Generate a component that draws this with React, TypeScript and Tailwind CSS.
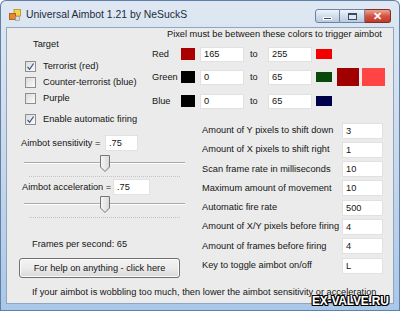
import clsx from "clsx";

type SettingRow = { label: string; value: string };

const settings: SettingRow[] = [
  { label: "Amount of Y pixels to shift down", value: "3" },
  { label: "Amount of X pixels to shift right", value: "1" },
  { label: "Scan frame rate in milliseconds", value: "10" },
  { label: "Maximum amount of movement", value: "10" },
  { label: "Automatic fire rate", value: "500" },
  { label: "Amount of X/Y pixels before firing", value: "4" },
  { label: "Amount of frames before firing", value: "4" },
  { label: "Key to toggle aimbot on/off", value: "L" },
];

function Field({ value, className }: { value: string; className?: string }) {
  return (
    <div className={clsx("shrink-0 border border-[#e1e1e1] bg-white pl-[3px] leading-[13px]", className)}>
      {value}
    </div>
  );
}

function CheckRow({ label, checked, className }: { label: string; checked?: boolean; className?: string }) {
  return (
    <div className={clsx("flex h-[16px] items-center", className)}>
      <span className="ml-[18px] flex h-[11px] w-[11px] items-center justify-center border border-[#8e8f8f] bg-gradient-to-br from-[#dcdcdc] to-[#fbfbfb]">
        {checked && (
          <svg width="9" height="9" viewBox="0 0 9 9">
            <path d="M1.5 4.8 L3.6 7.3 L7.6 1.5" fill="none" stroke="#3d4f86" strokeWidth="1.2" />
          </svg>
        )}
      </span>
      <span className="ml-[7px]">{label}</span>
    </div>
  );
}

function Slider({ className }: { className?: string }) {
  return (
    <div className={clsx("relative ml-[17px] flex h-[24px] w-[161px] flex-col", className)}>
      <div className="mt-[8px] h-[2px] border-t border-[#a9a9a9] bg-white" />
      <div className="mx-[5px] mt-[12px] border-t border-dotted border-[#c4c4c4]" />
      <svg className="absolute left-[76px] top-[1px]" width="10" height="17" viewBox="0 0 10 17">
        <defs>
          <linearGradient id="thumb" x1="0" x2="1" y1="0" y2="0">
            <stop offset="0" stopColor="#f7f7f7" />
            <stop offset="1" stopColor="#d9d9d9" />
          </linearGradient>
        </defs>
        <path d="M0.5 0.5 H9.5 V12 L5 16.5 L0.5 12 Z" fill="url(#thumb)" stroke="#767676" />
      </svg>
    </div>
  );
}

function ColorRow({
  label,
  from,
  to,
  left,
  right,
  extra,
  className,
}: {
  label: string;
  from: string;
  to: string;
  left: string;
  right: string;
  extra?: boolean;
  className?: string;
}) {
  return (
    <div className={clsx("flex h-[16px] items-center", className)}>
      <span className="w-[29px]">{label}</span>
      <span className={clsx("h-[12px] w-[14px] shrink-0", left)} />
      <Field value={from} className="ml-[5px] h-[15px] w-[44px]" />
      <span className="ml-[6px] w-[18px]">to</span>
      <Field value={to} className="h-[15px] w-[44px]" />
      <span className={clsx("ml-[4px] h-[10px] w-[16px] shrink-0", right)} />
      {extra && (
        <>
          <span className="ml-[5px] h-[18px] w-[22px] shrink-0 bg-[#a00000]" />
          <span className="ml-[3px] h-[18px] w-[23px] shrink-0 bg-[#ff4444]" />
        </>
      )}
    </div>
  );
}

function AppIcon() {
  return (
    <svg width="12" height="12" viewBox="0 0 12 12" className="ml-[9px] mt-[9px] shrink-0">
      <rect x="5" y="0.5" width="6.5" height="6.5" fill="#f3d34a" stroke="#b78d1c" strokeWidth="0.8" />
      <rect x="0.5" y="4.5" width="6" height="6" fill="#e8862c" stroke="#9c5313" strokeWidth="0.8" />
      <rect x="6.5" y="7.5" width="4" height="4" fill="#d9d9d9" stroke="#8a8a8a" strokeWidth="0.6" />
    </svg>
  );
}

export default function App() {
  return (
    <div className="relative flex h-[311px] w-[400px] flex-col overflow-hidden rounded-t-[6px] bg-gradient-to-b from-[#dfe8f2] via-[#c9d9eb] to-[#a9c7e8] font-['Liberation_Sans',Arial,sans-serif] text-[9.25px] leading-[11px] text-[#151515] shadow-[inset_0_0_0_1px_#5f80a8]">
      {/* title bar */}
      <div className="flex h-[28px] shrink-0 items-start">
        <AppIcon />
        <span className="ml-[5px] mt-[8px] text-[10.4px] leading-[13px] text-[#1d2b40]">
          Universal Aimbot 1.21 by NeSuckS
        </span>
        <div className="ml-auto mr-[9px] mt-[9px] flex h-[14px]">
          <div className="flex w-[25px] items-end justify-center rounded-l-[3px] border border-[#6c84a4] bg-gradient-to-b from-[#eef3f9] via-[#d2deec] to-[#b9cbe1] pb-[2px]">
            <span className="h-[3px] w-[9px] border border-white bg-[#3a4a61]" />
          </div>
          <div className="flex w-[25px] items-center justify-center border-y border-r border-[#6c84a4] bg-gradient-to-b from-[#eef3f9] via-[#d2deec] to-[#b9cbe1]">
            <span className="h-[7px] w-[9px] border border-t-2 border-[#3a4a61] bg-[#dfe7f1]" />
          </div>
          <div className="flex w-[26px] items-center justify-center rounded-r-[3px] border-y border-r border-[#7b2f26] bg-gradient-to-b from-[#eaa493] via-[#d3543f] to-[#c0392a] text-[11px] font-bold leading-none text-white">
            ✕
          </div>
        </div>
      </div>

      {/* client area */}
      <div className="mx-[7px] flex h-[275px] shrink-0 flex-col bg-[#ebebeb] ring-1 ring-[#8ea6c2]">
        <div className="flex">
          <div className="flex w-[145px] shrink-0 flex-col">
            <div className="ml-[26px] mt-[11px] h-[11px]">Target</div>
            <CheckRow className="mt-[8px]" checked label="Terrorist (red)" />
            <CheckRow label="Counter-terrorist (blue)" />
            <CheckRow label="Purple" />
            <CheckRow className="mt-[5px]" checked label="Enable automatic firing" />

            <div className="mt-[8px] flex h-[16px] items-center">
              <span className="ml-[14px] w-[84px]">Aimbot sensitivity =</span>
              <Field value=".75" className="h-[16px] w-[33px] leading-[14px]" />
            </div>
            <Slider className="mt-[3px]" />

            <div className="mt-[1px] flex h-[16px] items-center">
              <span className="ml-[15px] w-[91px]">Aimbot acceleration =</span>
              <Field value=".75" className="h-[16px] w-[37px] leading-[14px]" />
            </div>
            <Slider />

            <div className="ml-[25px] mt-[19.5px] h-[11px]">Frames per second: 65</div>
            <button className="ml-[12px] mt-[8.5px] h-[20px] w-[161px] rounded-[3px] border border-[#707070] bg-gradient-to-b from-[#f4f4f4] via-[#ebebeb] to-[#d9d9d9] text-[9.25px] leading-[11px] text-[#151515] shadow-[inset_0_0_0_1px_#fcfcfc]">
              For help on anything - click here
            </button>
          </div>

          <div className="flex flex-1 flex-col">
            <div className="ml-[15px] mt-[0.5px] h-[11px]">Pixel must be between these colors to trigger aimbot</div>
            <ColorRow className="mt-[6.5px]" label="Red" from="165" to="255" left="bg-[#a80000]" right="bg-[#f20000]" />
            <ColorRow className="mt-[7px]" label="Green" from="0" to="65" left="bg-black" right="bg-[#064a0a]" extra />
            <ColorRow className="mt-[8px]" label="Blue" from="0" to="65" left="bg-black" right="bg-[#00004a]" />

            <div className="mt-[14px] flex flex-col gap-[4.3px]">
              {settings.map((s) => (
                <div key={s.label} className="flex h-[15px] items-center">
                  <span className="ml-[50px] w-[140px] whitespace-nowrap">{s.label}</span>
                  <Field value={s.value} className="h-[16px] w-[41px] leading-[14px]" />
                </div>
              ))}
            </div>
          </div>
        </div>

        <div className="ml-[25px] mt-[8.5px] h-[11px] whitespace-nowrap">
          If your aimbot is wobbling too much, then lower the aimbot sensitivity or acceleration
        </div>
      </div>

      {/* site watermark */}
      <div className="absolute left-[312px] top-[294px] text-[12px] font-bold leading-[14px] tracking-[-0.2px] text-white [text-shadow:1px_1px_0_#000,-1px_-1px_0_#000,1px_-1px_0_#000,-1px_1px_0_#000,0_1px_0_#000,0_-1px_0_#000,1px_0_0_#000,-1px_0_0_#000]">
        EX-VALVE.RU
      </div>
    </div>
  );
}
